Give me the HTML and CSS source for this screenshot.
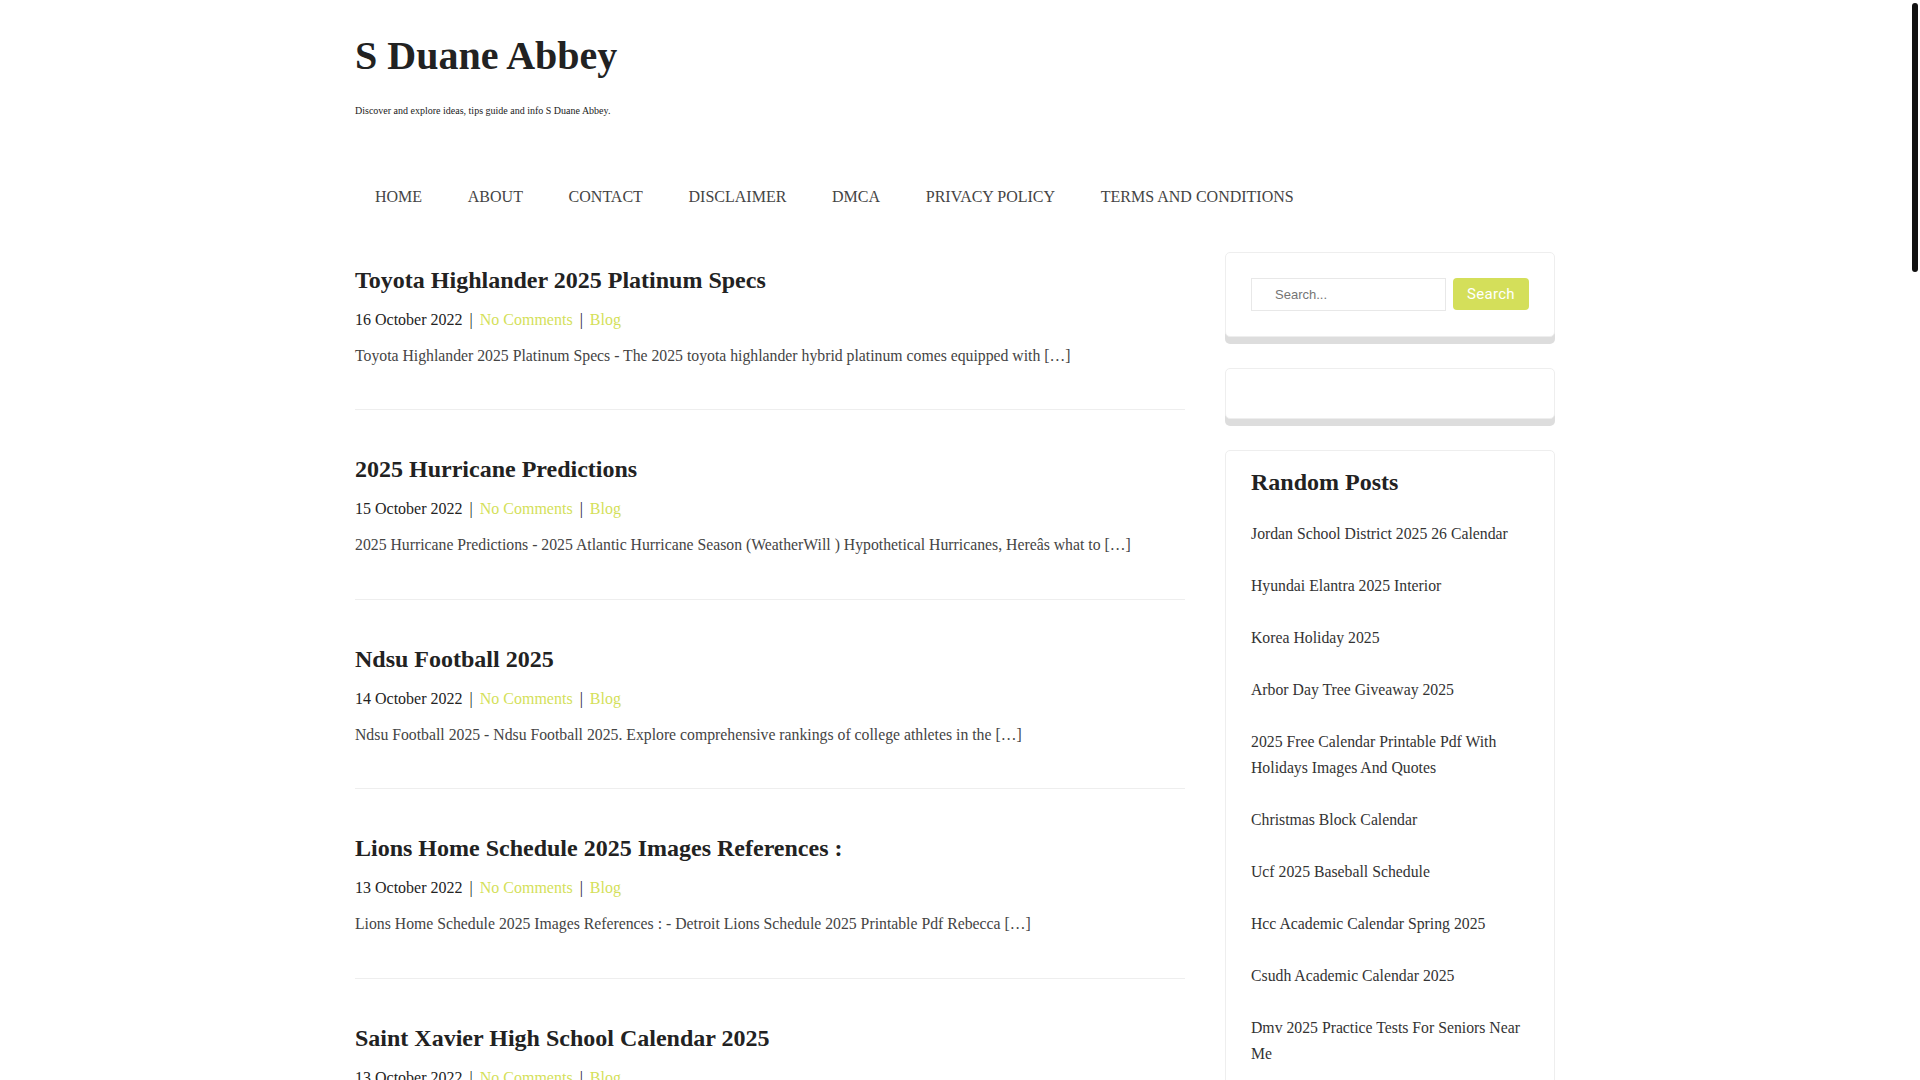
FILE: index.html
```html
<!DOCTYPE html>
<html lang="en">
<head>
<meta charset="utf-8">
<title>S Duane Abbey</title>
<link rel="stylesheet" href="styles.css">
</head>
<body>
<div class="scroll-thumb"></div>
<div class="wrap">
  <header class="site-header">
    <h1 class="site-title">S Duane Abbey</h1>
    <p class="site-desc">Discover and explore ideas, tips guide and info S Duane Abbey.</p>
    <nav class="main-nav">
      <a href="#">HOME</a>
      <a href="#">ABOUT</a>
      <a href="#">CONTACT</a>
      <a href="#">DISCLAIMER</a>
      <a href="#">DMCA</a>
      <a href="#">PRIVACY POLICY</a>
      <a href="#">TERMS AND CONDITIONS</a>
    </nav>
  </header>

  <div class="content-row">
    <main class="posts">
      <article class="post">
        <h2 class="post-title">Toyota Highlander 2025 Platinum Specs</h2>
        <div class="meta">16 October 2022 <span class="sep">|</span> <a href="#">No Comments</a> <span class="sep">|</span> <a href="#">Blog</a></div>
        <p class="excerpt">Toyota Highlander 2025 Platinum Specs - The 2025 toyota highlander hybrid platinum comes equipped with […]</p>
      </article>
      <article class="post">
        <h2 class="post-title">2025 Hurricane Predictions</h2>
        <div class="meta">15 October 2022 <span class="sep">|</span> <a href="#">No Comments</a> <span class="sep">|</span> <a href="#">Blog</a></div>
        <p class="excerpt">2025 Hurricane Predictions - 2025 Atlantic Hurricane Season (WeatherWill ) Hypothetical Hurricanes, Hereâs what to […]</p>
      </article>
      <article class="post">
        <h2 class="post-title">Ndsu Football 2025</h2>
        <div class="meta">14 October 2022 <span class="sep">|</span> <a href="#">No Comments</a> <span class="sep">|</span> <a href="#">Blog</a></div>
        <p class="excerpt">Ndsu Football 2025 - Ndsu Football 2025. Explore comprehensive rankings of college athletes in the […]</p>
      </article>
      <article class="post">
        <h2 class="post-title">Lions Home Schedule 2025 Images References :</h2>
        <div class="meta">13 October 2022 <span class="sep">|</span> <a href="#">No Comments</a> <span class="sep">|</span> <a href="#">Blog</a></div>
        <p class="excerpt">Lions Home Schedule 2025 Images References : - Detroit Lions Schedule 2025 Printable Pdf Rebecca […]</p>
      </article>
      <article class="post">
        <h2 class="post-title">Saint Xavier High School Calendar 2025</h2>
        <div class="meta">13 October 2022 <span class="sep">|</span> <a href="#">No Comments</a> <span class="sep">|</span> <a href="#">Blog</a></div>
        <p class="excerpt">Saint Xavier High School Calendar 2025 - Saint Xavier High School academic calendar and important dates for the […]</p>
      </article>
    </main>

    <aside class="sidebar">
      <div class="widget search-widget">
        <form class="search-form">
          <input class="search-input" type="text" placeholder="Search...">
          <button class="search-btn" type="button">Search</button>
        </form>
      </div>
      <div class="widget empty-widget"></div>
      <div class="widget random-widget">
        <h3 class="widget-title">Random Posts</h3>
        <ul class="random-list">
          <li><a href="#">Jordan School District 2025 26 Calendar</a></li>
          <li><a href="#">Hyundai Elantra 2025 Interior</a></li>
          <li><a href="#">Korea Holiday 2025</a></li>
          <li><a href="#">Arbor Day Tree Giveaway 2025</a></li>
          <li><a href="#">2025 Free Calendar Printable Pdf With Holidays Images And Quotes</a></li>
          <li><a href="#">Christmas Block Calendar</a></li>
          <li><a href="#">Ucf 2025 Baseball Schedule</a></li>
          <li><a href="#">Hcc Academic Calendar Spring 2025</a></li>
          <li><a href="#">Csudh Academic Calendar 2025</a></li>
          <li><a href="#">Dmv 2025 Practice Tests For Seniors Near Me</a></li>
        </ul>
      </div>
    </aside>
  </div>
</div>
</body>
</html>
```
FILE: styles.css
```css
body {
  margin: 0;
  padding-right: 10px;
  background: #ffffff;
  font-family: "Liberation Serif", "Times New Roman", serif;
  color: #333333;
}
a {
  text-decoration: none;
}
.scroll-thumb {
  position: fixed;
  top: 3px;
  right: 2px;
  width: 6px;
  height: 269px;
  border-radius: 3px;
  background: #111111;
  z-index: 10;
}
.wrap {
  width: 1200px;
  margin: 0 auto;
}
.site-header {
  padding-top: 32px;
}
.site-title {
  margin: 0;
  font-size: 40px;
  line-height: 48px;
  font-weight: bold;
  color: #222222;
}
.site-desc {
  margin: 23px 0 0;
  font-size: 10px;
  line-height: 15px;
  color: #222222;
}
.main-nav {
  margin-top: 67px;
  display: flex;
  gap: 5.7px;
}
.main-nav a {
  padding: 0 20px;
  font-size: 16px;
  line-height: 24px;
  color: #444444;
}
.content-row {
  margin-top: 43px;
  display: flex;
  align-items: flex-start;
  gap: 40px;
}
.posts {
  width: 830px;
  padding-top: 12px;
}
.post {
  border-bottom: 1px solid #eeeeee;
  padding-bottom: 42px;
  margin-bottom: 43px;
}
.post-title {
  margin: 0 0 12px;
  font-size: 24px;
  line-height: 32px;
  font-weight: bold;
  color: #222222;
}
.meta {
  font-size: 16px;
  line-height: 24px;
  margin-bottom: 12px;
  color: #222222;
}
.meta .sep {
  margin: 0 3px;
}
.meta a {
  color: #d4df5a;
}
.excerpt {
  margin: 0;
  font-size: 15.75px;
  line-height: 23.4px;
  color: #444444;
}
.sidebar {
  width: 330px;
  display: flex;
  flex-direction: column;
  gap: 31px;
}
.widget {
  background: #ffffff;
  border: 1px solid #eeeeee;
  border-radius: 5px;
  box-shadow: 0 7px 0 0 #dddddd;
  padding: 25px;
}
.empty-widget {
  padding: 0;
  height: 49px;
}
.random-widget {
  box-shadow: none;
  padding-top: 16px;
}
.search-form {
  display: flex;
  gap: 7px;
  align-items: flex-start;
}
.search-input {
  box-sizing: border-box;
  width: 195px;
  height: 33px;
  border: 1px solid #e8e8e8;
  border-radius: 0;
  padding: 0 0 0 23px;
  font-family: "Liberation Sans", Arial, sans-serif;
  font-size: 13px;
  color: #333333;
  outline: none;
}
.search-input::placeholder {
  color: #757575;
}
.search-btn {
  width: 76px;
  height: 32px;
  border: none;
  border-radius: 4px;
  background: #d4df5a;
  color: #ffffff;
  font-family: Roboto, "Liberation Sans", sans-serif;
  font-size: 15px;
  letter-spacing: 0.3px;
  padding: 0;
}
.widget-title {
  margin: 0 0 11px;
  font-size: 24px;
  line-height: 30px;
  font-weight: bold;
  color: #222222;
}
.random-list {
  list-style: none;
  margin: 0;
  padding: 0;
}
.random-list li {
  padding: 13px 0;
  font-size: 15.75px;
  line-height: 26px;
}
.random-list a {
  color: #333333;
}
```
